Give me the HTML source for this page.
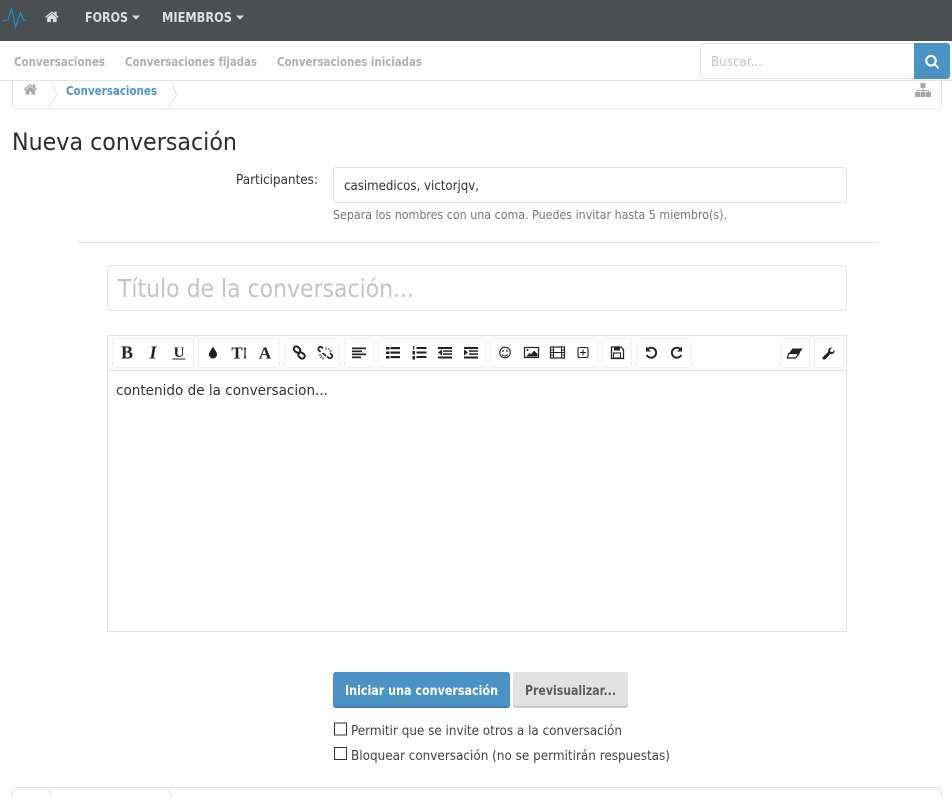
<!DOCTYPE html>
<html lang="es">
<head>
<meta charset="utf-8">
<title>Nueva conversación</title>
<style>
html,body{margin:0;padding:0;width:952px;height:797px;overflow:hidden;background:#fff}
svg{display:block;position:absolute;left:0;top:0}
text{font-family:"DejaVu Sans","Liberation Sans",sans-serif;white-space:pre}
.sub{font-size:12.5px;font-weight:bold;fill:#b0b0b0}
.nav{font-size:13px;font-weight:bold;fill:#dedede}
.b{fill:#fff;stroke:#e3e3e3;stroke-width:1}
.g{fill:#fff;stroke:#f0f0f0;stroke-width:1}
.ic{fill:#222}
.st{fill:none;stroke:#222}
</style>
</head>
<body>
<svg width="952" height="797" viewBox="0 0 952 797" xmlns="http://www.w3.org/2000/svg">
<defs>
<path id="home" d="M1472 992v480q0 26-19 45t-45 19h-384v-384h-256v384h-384q-26 0-45-19t-19-45v-480q0-1 .5-3t.5-3l575-474 575 474q1 2 1 6zm223-69l-62 74q-8 9-21 11h-3q-13 0-21-7l-692-577-692 577q-12 8-24 7-13-2-21-11l-62-74q-8-10-7-23.5t11-21.5l719-599q32-26 76-26t76 26l244 204v-195q0-14 9-23t23-9h192q14 0 23 9t9 23v408l219 182q10 8 11 21.5t-7 23.5z"/>
</defs>

<!-- top nav -->
<rect x="0" y="0" width="952" height="41" fill="#4b4f52"/>
<polyline points="3,20.5 8,20 11.5,8 15.5,27 20.5,12.5 23.5,20 27,20.5" fill="none" stroke="#1c8ad2" stroke-width="1.2"/>
<use href="#home" transform="translate(44.5,9.5) scale(0.00825)" fill="#dedede"/>
<text class="nav" x="85" y="22" textLength="43" lengthAdjust="spacingAndGlyphs">FOROS</text>
<polygon points="132,15.5 140,15.5 136,19.5" fill="#dedede"/>
<text class="nav" x="162" y="22" textLength="70" lengthAdjust="spacingAndGlyphs">MIEMBROS</text>
<polygon points="236,15.5 244,15.5 240,19.5" fill="#dedede"/>

<!-- sub nav -->
<text class="sub" x="14" y="66" textLength="91" lengthAdjust="spacingAndGlyphs">Conversaciones</text>
<text class="sub" x="125" y="66" textLength="132" lengthAdjust="spacingAndGlyphs">Conversaciones fijadas</text>
<text class="sub" x="277" y="66" textLength="145" lengthAdjust="spacingAndGlyphs">Conversaciones iniciadas</text>
<line x1="0" y1="80.5" x2="952" y2="80.5" stroke="#e3e3e3"/>

<!-- search -->
<rect class="b" x="700.5" y="43.5" width="249" height="35" rx="3"/>
<text x="711" y="66" font-size="13" fill="#c4c4c4" textLength="51" lengthAdjust="spacingAndGlyphs">Buscar...</text>
<path d="M914 43h33a3 3 0 0 1 3 3v30a3 3 0 0 1-3 3h-33z" fill="#4b92c5"/>
<path transform="translate(924.6,53.8) scale(0.0083)" fill="#fff" d="M1216 832q0-185-131.5-316.5t-316.5-131.5-316.5 131.5-131.5 316.5 131.5 316.5 316.5 131.5 316.5-131.5 131.5-316.5zm512 832q0 52-38 90t-90 38q-54 0-90-38l-343-342q-179 124-399 124-143 0-273.5-55.5t-225-150-150-225-55.5-273.5 55.5-273.5 150-225 225-150 273.5-55.5 273.5 55.5 225 150 150 225 55.5 273.5q0 220-124 399l343 343q37 37 37 90z"/>

<!-- breadcrumb -->
<path d="M12.5 81v24a4 4 0 0 0 4 4h921a4 4 0 0 0 4-4v-24" fill="none" stroke="#e3e3e3"/>
<use href="#home" transform="translate(23,82) scale(0.00825)" fill="#a8a8a8"/>
<polyline points="51.5,81 57,95 48.5,108.5" fill="none" stroke="#e3e3e3"/>
<polyline points="171.5,81 176.5,95 167.5,108.5" fill="none" stroke="#e3e3e3"/>
<text x="66" y="95" font-size="12.5" font-weight="bold" fill="#5296c8" textLength="91" lengthAdjust="spacingAndGlyphs">Conversaciones</text>
<g fill="#a8a8a8">
<rect x="920.5" y="83" width="5" height="5"/>
<rect x="915" y="92" width="5" height="5"/>
<rect x="920.5" y="92" width="5" height="5"/>
<rect x="926" y="92" width="5" height="5"/>
<path d="M922.5 88h1v2h5.500v2h-1v-1h-4.500v1h-1v-1h-4.500v1h-1v-2h5.500z"/>
</g>

<!-- heading -->
<text x="12" y="150" font-size="24" fill="#2d2d2d" textLength="225" lengthAdjust="spacingAndGlyphs">Nueva conversación</text>

<!-- participantes -->
<text x="236" y="184" font-size="13" fill="#333" textLength="82" lengthAdjust="spacingAndGlyphs">Participantes:</text>
<rect class="b" x="333.5" y="167.5" width="513" height="35" rx="3"/>
<text x="344" y="190" font-size="13" fill="#333" textLength="135" lengthAdjust="spacingAndGlyphs">casimedicos, victorjqv,</text>
<text x="333" y="219" font-size="12" fill="#777" textLength="394" lengthAdjust="spacingAndGlyphs">Separa los nombres con una coma. Puedes invitar hasta 5 miembro(s).</text>
<line x1="77" y1="242.500" x2="878" y2="242.500" stroke="#e3e3e3"/>

<!-- title -->
<rect class="b" x="107.5" y="265.5" width="739" height="45" rx="3"/>
<text x="118" y="297" font-size="25" fill="#c4c4c4" textLength="296" lengthAdjust="spacingAndGlyphs">Título de la conversación...</text>

<!-- editor -->
<rect class="b" x="107.5" y="335.5" width="739" height="296"/>
<line x1="108" y1="370.500" x2="846" y2="370.500" stroke="#e3e3e3"/>
<rect class="g" x="112.5" y="338.5" width="81" height="29" rx="2"/>
<rect class="g" x="198.5" y="338.5" width="81" height="29" rx="2"/>
<rect class="g" x="284.5" y="338.5" width="55" height="29" rx="2"/>
<rect class="g" x="344.5" y="338.5" width="29" height="29" rx="2"/>
<rect class="g" x="378.5" y="338.5" width="107" height="29" rx="2"/>
<rect class="g" x="490.5" y="338.5" width="107" height="29" rx="2"/>
<rect class="g" x="602.5" y="338.5" width="29" height="29" rx="2"/>
<rect class="g" x="636.5" y="338.5" width="55" height="29" rx="2"/>
<rect class="g" x="780.5" y="338.5" width="29" height="29" rx="2"/>
<rect class="g" x="814.5" y="338.5" width="29" height="29" rx="2"/>

<!-- B I U -->
<text x="127" y="358.500" text-anchor="middle" font-size="18" font-weight="bold" style="font-family:'Liberation Serif',serif" fill="#222">B</text>
<text x="153" y="358.500" text-anchor="middle" font-size="18" font-weight="bold" font-style="italic" style="font-family:'Liberation Serif',serif" fill="#222">I</text>
<text x="179" y="357" text-anchor="middle" font-size="15" style="font-family:'Liberation Serif',serif" font-weight="bold" fill="#222">U</text>
<rect x="172.500" y="358.500" width="13" height="1" fill="#222"/>

<!-- drop, size, font -->
<path class="ic" d="M213 346.500c1 2.500 4 5 4 8a4 4 0 0 1-8 0c0-3 3-5.500 4-8z"/>
<text x="237" y="358.500" text-anchor="middle" font-size="17" font-weight="bold" style="font-family:'Liberation Serif',serif" fill="#222">T</text>
<path class="ic" d="M245 347l1.600 2.200h-1v7.600h1l-1.600 2.200-1.600-2.200h1v-7.600h-1z"/>
<text x="265" y="358.500" text-anchor="middle" font-size="17" font-weight="bold" style="font-family:'Liberation Serif',serif" fill="#222">A</text>

<!-- link / unlink -->
<g class="st" stroke-width="2">
<rect x="293.500" y="347" width="7" height="5" rx="2.500" transform="rotate(40 297 349.500)"/>
<rect x="298" y="353" width="7" height="5" rx="2.500" transform="rotate(40 301.500 355.500)"/>
</g>
<g fill="none" stroke="#222" stroke-width="1.700">
<path d="M323 348.500l-1.500-1.500a2.300 2.300 0 0 0-3 3l2 2"/>
<path d="M327 356.500l2 1.500a2.300 2.300 0 0 0 3-3l-2-2"/>
<path d="M322.500 353l3.500 3"/>
</g>
<path d="M326 347v3M329.500 348l-1.500 2M332 351h-3M320 358l2-2M323 360v-3M318.500 355h3" stroke="#555" stroke-width="1" fill="none"/>

<!-- align -->
<g class="ic">
<rect x="352" y="347.500" width="14" height="1.700"/>
<rect x="352" y="350.500" width="10" height="1.700"/>
<rect x="352" y="353.500" width="14" height="1.700"/>
<rect x="352" y="356.500" width="9" height="1.700"/>
</g>

<!-- ul -->
<g class="ic">
<rect x="386" y="347" width="3.500" height="2.500"/><rect x="390.500" y="347" width="9.500" height="2.200"/>
<rect x="386" y="351.500" width="3.500" height="2.500"/><rect x="390.500" y="351.500" width="9.500" height="2.200"/>
<rect x="386" y="356" width="3.500" height="2.500"/><rect x="390.500" y="356" width="9.500" height="2.200"/>
</g>
<!-- ol -->
<g class="ic">
<rect x="416.500" y="347" width="10" height="2"/><rect x="416.500" y="351.500" width="10" height="2"/><rect x="416.500" y="356" width="10" height="2"/>
<rect x="413" y="346" width="1.300" height="3.500"/><rect x="412.500" y="351" width="2.500" height="3.500"/><rect x="412.500" y="356" width="2.500" height="3.500"/>
</g>
<!-- outdent -->
<g class="ic">
<rect x="438" y="347" width="14" height="2"/>
<rect x="443" y="350.300" width="9" height="1.500"/>
<rect x="443" y="353.300" width="9" height="1.500"/>
<rect x="438" y="356.500" width="14" height="2"/>
<polygon points="442,349.500 442,355.500 438,352.500"/>
</g>
<!-- indent -->
<g class="ic">
<rect x="464" y="347" width="14" height="2"/>
<rect x="469" y="350.300" width="9" height="1.500"/>
<rect x="469" y="353.300" width="9" height="1.500"/>
<rect x="464" y="356.500" width="14" height="2"/>
<polygon points="464,349.500 464,355.500 468,352.500"/>
</g>

<!-- smile -->
<circle cx="505" cy="352.500" r="5.300" class="st" stroke-width="1.100"/>
<circle cx="503" cy="351" r="0.900" class="ic"/>
<circle cx="507" cy="351" r="0.900" class="ic"/>
<path d="M502 354.500c1.500 2 4.500 2 6 0" class="st" stroke-width="1"/>
<!-- image -->
<rect x="524.500" y="347.500" width="14" height="10" class="st" stroke-width="1.200"/>
<path class="ic" d="M526 356.500l3.500-3.500 1.500 1.200 3-3.700 3.500 3.500v2.500z"/>
<circle cx="527.500" cy="350" r="1" class="ic"/>
<!-- film -->
<rect x="550.500" y="347" width="14" height="11" class="st" stroke-width="1.200"/>
<path class="st" stroke-width="1" d="M553.500 347v11M561.500 347v11M553.500 352.500h8M550.500 350h3M550.500 352.500h3M550.500 355h3M561.500 350h3M561.500 352.500h3M561.500 355h3"/>
<!-- plus box -->
<rect x="578" y="347.500" width="10" height="10" rx="1.500" class="st" stroke-width="1.100"/>
<path class="st" stroke-width="1.100" d="M583 349.500v6M580 352.500h6"/>

<!-- save -->
<path class="st" stroke-width="1.300" d="M611.500 347h9.500l2.500 2.500v9h-12z"/>
<rect x="614" y="347" width="6" height="3.500" class="ic"/>
<rect x="613.500" y="353" width="7" height="5" class="st" stroke-width="1.100"/>

<!-- undo / redo -->
<path d="M647.300 349.500a5 5 0 1 1-.6 5.500" class="st" stroke-width="1.900"/>
<polygon class="ic" points="646,346.500 646,351.500 651,351.500"/>
<path d="M680.700 349.500a5 5 0 1 0 .6 5.500" class="st" stroke-width="1.900"/>
<polygon class="ic" points="682,346.500 682,351.500 677,351.500"/>

<!-- eraser -->
<path class="ic" d="M792.500 348.500h10.200l-3.700 5h-10.200z"/>
<path class="st" stroke-width="1.200" d="M788.800 353.500h10.200l-3.500 4.500h-8.200z"/>
<!-- wrench -->
<path class="ic" d="M823.500 359.500l-1.500-1.500 6.300-6.300c-.6-2.500 1.200-4.500 4-4.200l-2.200 2.200.4 2 2 .4 2.200-2.200c.3 2.800-1.700 4.600-4.200 4l-5.400 5.600z"/>

<text x="116" y="395" font-size="14.500" fill="#333" textLength="212" lengthAdjust="spacingAndGlyphs">contenido de la conversacion...</text>

<!-- buttons -->
<rect x="333" y="672" width="177" height="36" rx="3" fill="#3f7fae"/>
<rect x="333" y="672" width="177" height="34" rx="3" fill="#4b92c5"/>
<text x="345" y="695" font-size="13" font-weight="bold" fill="#fff" textLength="153" lengthAdjust="spacingAndGlyphs">Iniciar una conversación</text>
<rect x="513" y="672" width="115" height="36" rx="3" fill="#c8c8c8"/>
<rect x="513" y="672" width="115" height="34" rx="3" fill="#e2e2e2"/>
<text x="525" y="695" font-size="13" font-weight="bold" fill="#5d5d5d" textLength="91" lengthAdjust="spacingAndGlyphs">Previsualizar...</text>

<!-- checkboxes -->
<rect x="334.500" y="723" width="12" height="12" fill="#fff" stroke="#333"/>
<text x="351" y="735" font-size="13" fill="#444" textLength="271" lengthAdjust="spacingAndGlyphs">Permitir que se invite otros a la conversación</text>
<rect x="334.500" y="747.500" width="12" height="12" fill="#fff" stroke="#333"/>
<text x="351" y="760" font-size="13" fill="#444" textLength="319" lengthAdjust="spacingAndGlyphs">Bloquear conversación (no se permitirán respuestas)</text>

<!-- bottom breadcrumb -->
<path d="M12.500 797v-5.500a4 4 0 0 1 4-4h921a4 4 0 0 1 4 4v5.500" fill="none" stroke="#e3e3e3"/>
<line x1="48.300" y1="789" x2="51.700" y2="797" stroke="#e3e3e3"/>
<line x1="167.700" y1="789" x2="171.700" y2="797" stroke="#e3e3e3"/>
</svg>
</body>
</html>
